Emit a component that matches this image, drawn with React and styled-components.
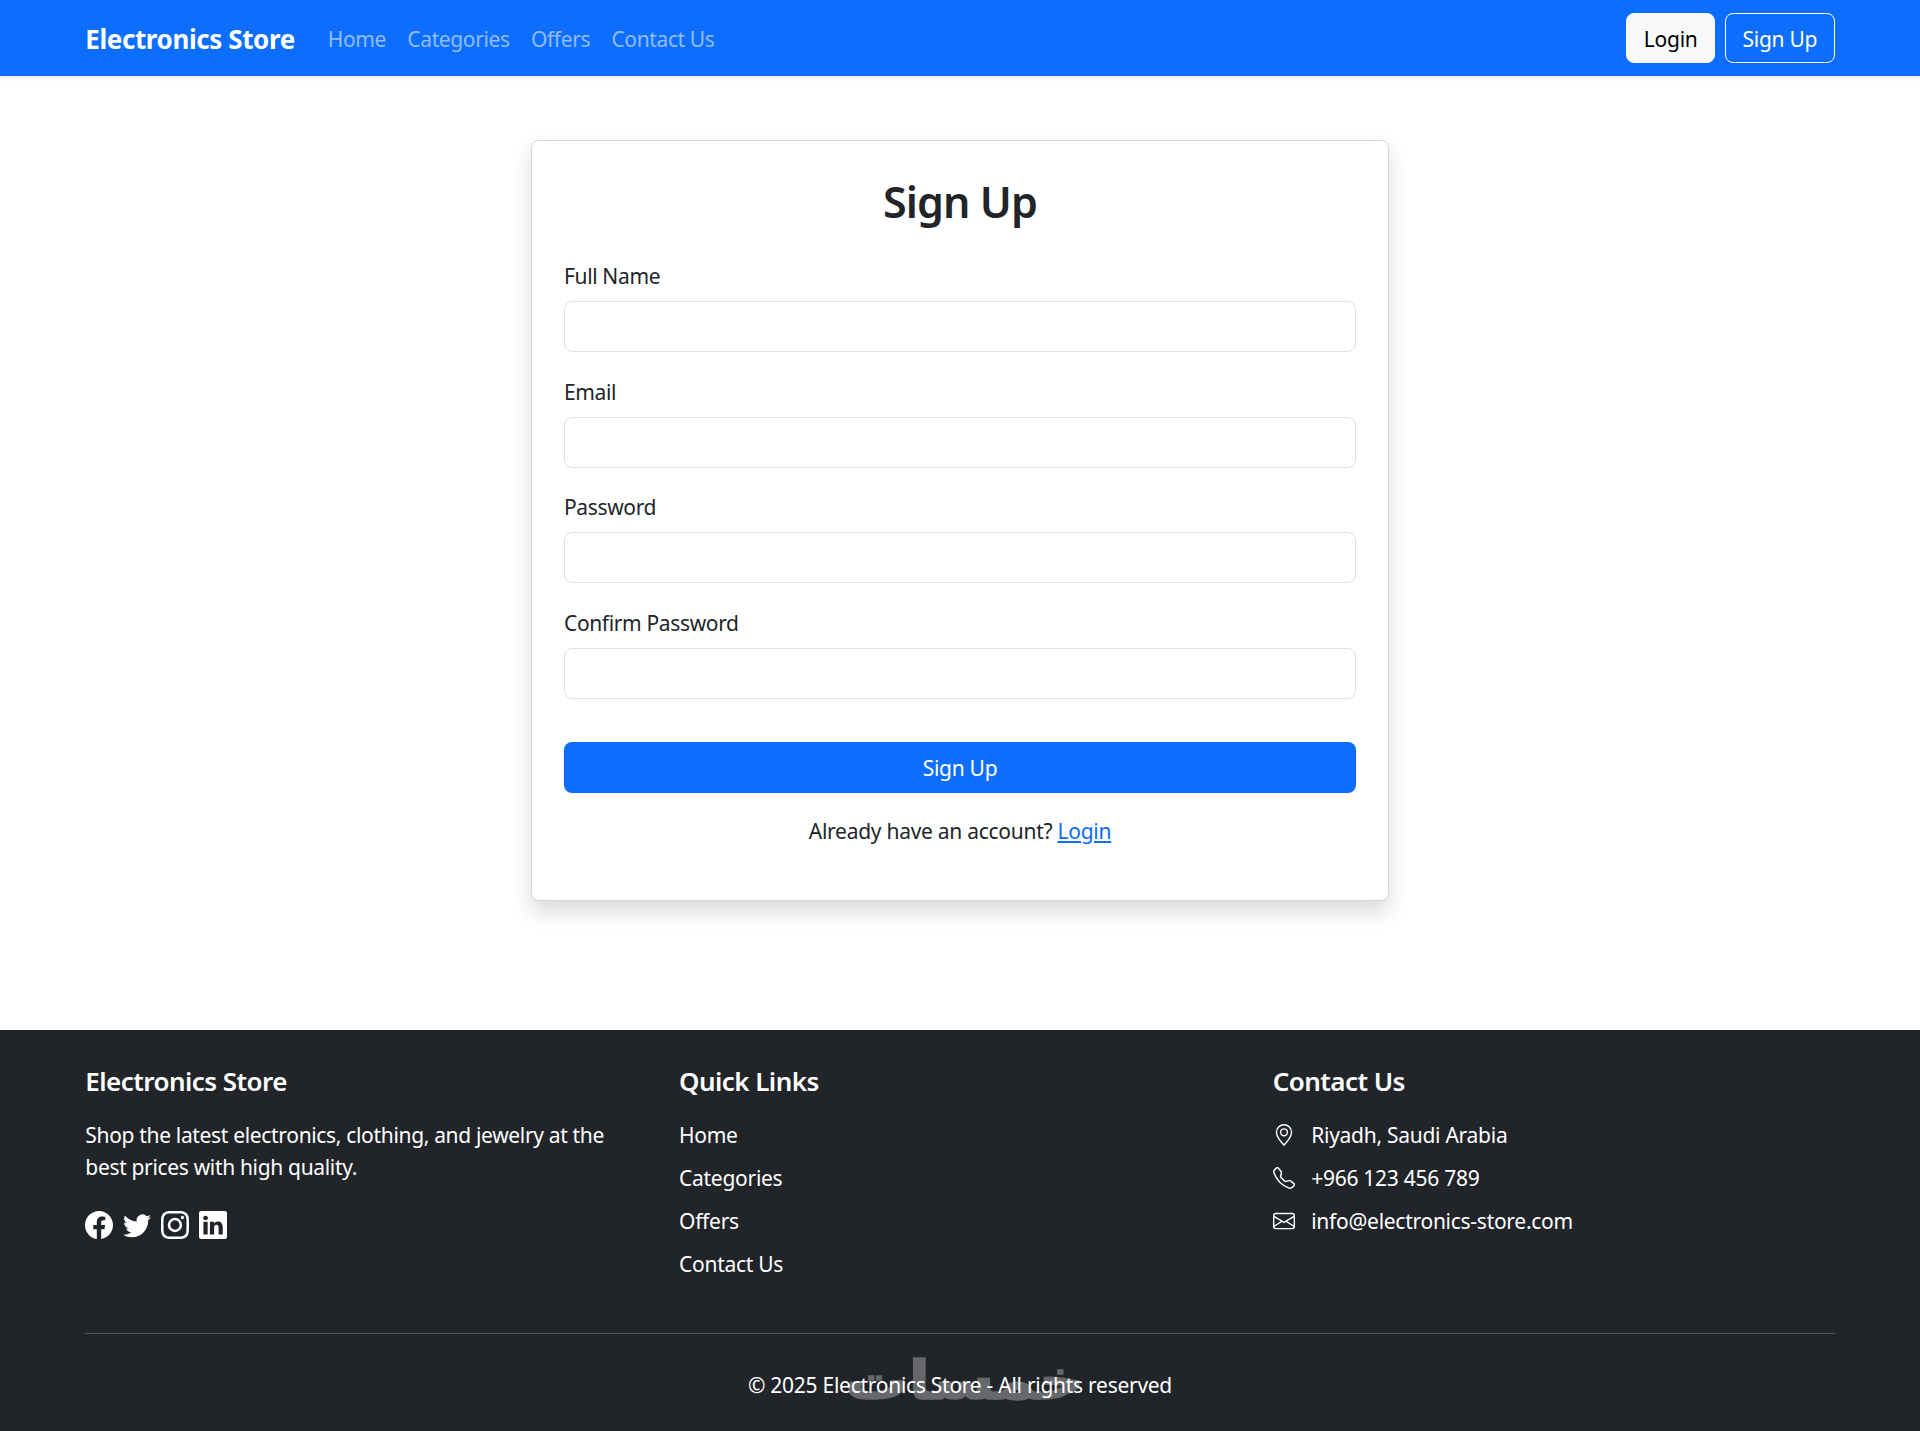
import React from 'react';
import styled, { createGlobalStyle } from 'styled-components';
import {
  BsFacebook,
  BsTwitter,
  BsInstagram,
  BsLinkedin,
  BsGeoAlt,
  BsTelephone,
  BsEnvelope,
} from 'react-icons/bs';

const GlobalStyle = createGlobalStyle`
  * {
    box-sizing: border-box;
  }
  body {
    margin: 0;
    background: #fff;
    font-family: "Noto Sans", "Open Sans", Arial, sans-serif;
    font-size: 21px;
    line-height: 32px;
    letter-spacing: -0.27px;
    color: #212529;
  }
`;

const Navbar = styled.nav`
  height: 76px;
  padding: 0 85.33px;
  display: flex;
  align-items: center;
  background: #0d6efd;
  box-shadow: 0 2px 5px rgba(0, 0, 0, 0.08);
`;

const Brand = styled.a`
  margin-right: 33px;
  padding-top: 2px;
  color: #fff;
  font-size: 26px;
  font-weight: 700;
  letter-spacing: -0.4px;
`;

const NavLinks = styled.div`
  display: flex;
  gap: 21.33px;
  flex: 1;
`;

const NavLink = styled.a`
  padding-top: 2px;
  color: rgba(255, 255, 255, 0.55);
  letter-spacing: -0.38px;
`;

const NavActions = styled.div`
  display: flex;
  gap: 10px;
`;

const NavButton = styled.button`
  height: 50px;
  padding: 2px 16.5px 0;
  border: 1.33px solid ${(p) => (p.$outline ? '#fff' : '#f8f9fa')};
  border-radius: 8px;
  background: ${(p) => (p.$outline ? 'transparent' : '#f8f9fa')};
  color: ${(p) => (p.$outline ? '#fff' : '#000')};
  font: inherit;
  letter-spacing: inherit;
`;

const Main = styled.main`
  height: 954px;
  padding-top: 64px;
`;

const Card = styled.section`
  width: 858px;
  height: 761px;
  margin: 0 auto;
  padding: 32px;
  border: 1.33px solid #d4d5d6;
  border-radius: 8px;
  background: #fff;
  box-shadow: 0 10.67px 21.33px rgba(0, 0, 0, 0.15);
`;

const Title = styled.h2`
  margin: 0 0 29.4px;
  height: 58px;
  text-align: center;
  font-size: 43px;
  font-weight: 600;
  line-height: 58px;
  letter-spacing: -0.9px;
`;

const Field = styled.div`
  margin-bottom: 23.8px;
`;

const Label = styled.label`
  display: block;
  margin-bottom: 8.7px;
  letter-spacing: -0.36px;
`;

const Input = styled.input`
  display: block;
  width: 100%;
  height: 51px;
  border: 1.33px solid #dee2e6;
  border-radius: 8px;
  background: #fff;
`;

const Submit = styled.button`
  display: block;
  width: 100%;
  height: 51px;
  margin-top: 43px;
  padding-top: 3px;
  border: none;
  border-radius: 8px;
  background: #0d6efd;
  color: #fff;
  font: inherit;
  letter-spacing: inherit;
`;

const SwitchLine = styled.p`
  margin: 22.5px 0 0;
  text-align: center;
`;

const TextLink = styled.a`
  color: #0d6efd;
  text-decoration: underline;
`;

const Footer = styled.footer`
  position: relative;
  height: 401px;
  padding: 35px 85.33px 0;
  background: #212529;
  color: #fff;
`;

const Columns = styled.div`
  position: relative;
  display: grid;
  grid-template-columns: repeat(3, 593.7px);
  height: 269px;
  border-bottom: 1.33px solid #57595c;
`;

const Column = styled.div`
  display: flex;
  flex-direction: column;
`;

const ColumnTitle = styled.h5`
  margin: 0 0 22px;
  font-size: 26px;
  font-weight: 600;
  line-height: 32px;
  letter-spacing: -0.55px;
`;

const Blurb = styled.p`
  width: 540px;
  margin: 0 0 27.5px;
  letter-spacing: -0.33px;
`;

const Socials = styled.div`
  display: flex;
  gap: 10px;
  font-size: 28px;
  line-height: 0;
`;

const FooterLinks = styled.ul`
  margin: 0;
  padding: 0;
  list-style: none;
  display: flex;
  flex-direction: column;
  gap: 11px;
`;

const FooterLink = styled.li`
  display: flex;
  align-items: center;
  gap: 16.5px;
  svg {
    flex: none;
    font-size: 22px;
  }
`;

const Copyright = styled.p`
  position: relative;
  margin: 35px 0 0;
  text-align: center;
`;

const Watermark = styled.span`
  position: absolute;
  left: 845px;
  top: 326px;
  color: #66686b;
  -webkit-text-stroke: 1.5px #66686b;
  font-family: "DejaVu Sans", sans-serif;
  font-size: 54px;
  font-weight: 700;
  line-height: 50px;
  transform: scaleX(1.17);
  transform-origin: left center;
`;

const navItems = ['Home', 'Categories', 'Offers', 'Contact Us'];
const fields = ['Full Name', 'Email', 'Password', 'Confirm Password'];

export default function App() {
  return (
    <>
      <GlobalStyle />
      <Navbar>
        <Brand>Electronics Store</Brand>
        <NavLinks>
          {navItems.map((item) => (
            <NavLink key={item}>{item}</NavLink>
          ))}
        </NavLinks>
        <NavActions>
          <NavButton>Login</NavButton>
          <NavButton $outline>Sign Up</NavButton>
        </NavActions>
      </Navbar>
      <Main>
        <Card>
          <Title>Sign Up</Title>
          {fields.map((field) => (
            <Field key={field}>
              <Label>{field}</Label>
              <Input type={field.includes('Password') ? 'password' : 'text'} />
            </Field>
          ))}
          <Submit>Sign Up</Submit>
          <SwitchLine>
            Already have an account? <TextLink>Login</TextLink>
          </SwitchLine>
        </Card>
      </Main>
      <Footer>
        <Watermark lang="ar">خمسات</Watermark>
        <Columns>
          <Column>
            <ColumnTitle>Electronics Store</ColumnTitle>
            <Blurb>Shop the latest electronics, clothing, and jewelry at the best prices with high quality.</Blurb>
            <Socials>
              <BsFacebook />
              <BsTwitter />
              <BsInstagram />
              <BsLinkedin />
            </Socials>
          </Column>
          <Column>
            <ColumnTitle>Quick Links</ColumnTitle>
            <FooterLinks>
              {navItems.map((item) => (
                <FooterLink key={item}>{item}</FooterLink>
              ))}
            </FooterLinks>
          </Column>
          <Column>
            <ColumnTitle>Contact Us</ColumnTitle>
            <FooterLinks>
              <FooterLink><BsGeoAlt />Riyadh, Saudi Arabia</FooterLink>
              <FooterLink><BsTelephone />+966 123 456 789</FooterLink>
              <FooterLink><BsEnvelope />info@electronics-store.com</FooterLink>
            </FooterLinks>
          </Column>
        </Columns>
        <Copyright>© 2025 Electronics Store - All rights reserved</Copyright>
      </Footer>
    </>
  );
}
